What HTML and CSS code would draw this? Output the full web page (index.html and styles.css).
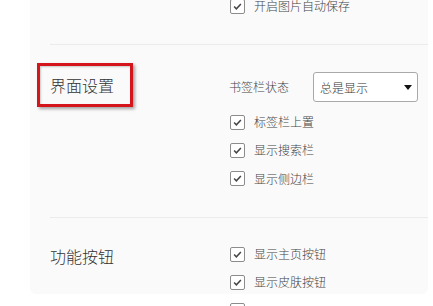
FILE: index.html
```html
<!DOCTYPE html>
<html lang="zh-CN">
<head>
<meta charset="utf-8">
<link rel="stylesheet" href="styles.css">
</head>
<body>
<div class="panel">
  <section class="section first">
    <div class="title"></div>
    <div class="options">
      <label class="row"><span class="box"><svg viewBox="0 0 15 15"><path d="M3.6 7.6 L6.2 10.2 L11.4 4.6"/></svg></span><span class="text">开启图片自动保存</span></label>
    </div>
  </section>
  <section class="section ui">
    <div class="title"><span class="mark"></span>界面设置</div>
    <div class="options">
      <div class="select-row">
        <span class="text">书签栏状态</span>
        <div class="select"><span>总是显示</span><i class="caret"></i></div>
      </div>
      <label class="row"><span class="box"><svg viewBox="0 0 15 15"><path d="M3.6 7.6 L6.2 10.2 L11.4 4.6"/></svg></span><span class="text">标签栏上置</span></label>
      <label class="row"><span class="box"><svg viewBox="0 0 15 15"><path d="M3.6 7.6 L6.2 10.2 L11.4 4.6"/></svg></span><span class="text">显示搜索栏</span></label>
      <label class="row"><span class="box"><svg viewBox="0 0 15 15"><path d="M3.6 7.6 L6.2 10.2 L11.4 4.6"/></svg></span><span class="text">显示侧边栏</span></label>
    </div>
  </section>
  <section class="section buttons">
    <div class="title">功能按钮</div>
    <div class="options">
      <label class="row"><span class="box"><svg viewBox="0 0 15 15"><path d="M3.6 7.6 L6.2 10.2 L11.4 4.6"/></svg></span><span class="text">显示主页按钮</span></label>
      <label class="row"><span class="box"><svg viewBox="0 0 15 15"><path d="M3.6 7.6 L6.2 10.2 L11.4 4.6"/></svg></span><span class="text">显示皮肤按钮</span></label>
      <label class="row"><span class="box"></span></label>
    </div>
  </section>
</div>
</body>
</html>
```
FILE: styles.css
```css
html, body {
  margin: 0;
  padding: 0;
  background: #ffffff;
  overflow: hidden;
  height: 306px;
}
body {
  font-family: "Noto Sans CJK SC", "Noto Sans", sans-serif;
  font-weight: 300;
  color: #444;
}
.panel {
  margin-left: 30px;
  width: 398px;
  height: 302px;
  background: #fafafa;
  border-radius: 0 0 6px 6px;
}
.section {
  display: flex;
  margin-left: 20px;
  border-top: 1px solid #ebebeb;
}
.section.first {
  border-top: none;
  margin-top: -8px;
  padding-bottom: 24px;
}
.section.ui {
  padding-top: 27px;
  padding-bottom: 24px;
}
.section.buttons {
  padding-top: 22px;
}
.title {
  position: relative;
  width: 179px;
  flex: none;
  font-size: 16px;
  line-height: 20px;
  color: #333;
}
.ui .title { margin-top: 3px; }
.buttons .title { margin-top: 6px; }
.mark {
  position: absolute;
  left: -13px;
  top: -12px;
  width: 90px;
  height: 38px;
  border: 3px solid #d4161c;
  box-shadow: 2px 2px 3px rgba(0, 0, 0, 0.35), inset 1px 1px 2px rgba(0, 0, 0, 0.2);
}
.options {
  display: flex;
  flex-direction: column;
}
.row {
  display: flex;
  align-items: center;
  height: 28px;
  margin-left: 1px;
}
.ui .row:nth-child(n+3), .buttons .row:nth-child(n+2) { height: 28.5px; }
.box {
  width: 13px;
  height: 13px;
  border: 1px solid #8c8c8c;
  border-radius: 2px;
  background: #fff;
  display: flex;
  flex: none;
}
.box svg {
  width: 13px;
  height: 13px;
}
.box path {
  fill: none;
  stroke: #444;
  stroke-width: 1.7;
}
.text {
  font-size: 12px;
  line-height: 16px;
  color: #444;
  margin-left: 9px;
}
.select-row {
  display: flex;
  align-items: center;
  height: 30px;
  margin-bottom: 6px;
}
.select-row .text {
  margin-left: 0;
  width: 84px;
}
.select {
  box-sizing: border-box;
  width: 105px;
  height: 30px;
  border: 1px solid #a9a9a9;
  border-radius: 3px;
  background: #fff;
  display: flex;
  align-items: center;
  justify-content: space-between;
  padding: 0 5px 0 6px;
  font-size: 12px;
  color: #333;
}
.caret {
  width: 0;
  height: 0;
  border-left: 4.5px solid transparent;
  border-right: 4.5px solid transparent;
  border-top: 5px solid #111;
}
```
